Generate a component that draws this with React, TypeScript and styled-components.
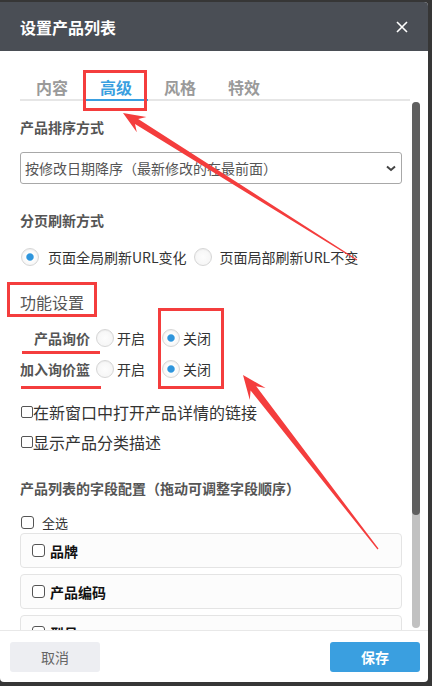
import React from "react";
import styled, { createGlobalStyle } from "styled-components";

const GlobalStyle = createGlobalStyle`
  html, body {
    margin: 0;
    padding: 0;
    background: #363636;
  }
  body {
    font-family: "Noto Sans CJK SC", "Noto Sans", sans-serif;
  }
  * {
    box-sizing: border-box;
  }
`;

const fields = ["品牌", "产品编码", "型号"];

export default function App() {
  return (
    <Page>
      <GlobalStyle />
      <Modal>
        <Header>
          <Title>设置产品列表</Title>
          <CloseButton aria-label="关闭">
            <svg width="12" height="12" viewBox="0 0 12 12">
              <path d="M1 1 L11 11 M11 1 L1 11" stroke="#fff" strokeWidth="1.6" />
            </svg>
          </CloseButton>
        </Header>

        <TabBar>
          <Tab>内容</Tab>
          <Tab $active>高级</Tab>
          <Tab>风格</Tab>
          <Tab>特效</Tab>
        </TabBar>

        <BodyRow>
          <Body>
            <SectionLabel $mt={16}>产品排序方式</SectionLabel>
            <SelectBox>
              <span>按修改日期降序（最新修改的在最前面）</span>
              <svg width="10" height="7" viewBox="0 0 10 7">
                <path d="M1 1.5 L5 5 L9 1.5" fill="none" stroke="#444" strokeWidth="2" />
              </svg>
            </SelectBox>

            <SectionLabel $mt={26}>分页刷新方式</SectionLabel>
            <RadioRow>
              <Radio $checked $ml={1} />
              <RadioText $ml={9}>页面全局刷新URL变化</RadioText>
              <Radio $ml={7} />
              <RadioText $ml={8}>页面局部刷新URL不变</RadioText>
            </RadioRow>

            <Heading>功能设置</Heading>
            <OptionRow $mt={8}>
              <OptionLabel>产品询价</OptionLabel>
              <Radio $ml={6} />
              <RadioText $ml={3}>开启</RadioText>
              <Radio $checked $ml={17} />
              <RadioText $ml={3}>关闭</RadioText>
            </OptionRow>
            <OptionRow $mt={1}>
              <OptionLabel>加入询价篮</OptionLabel>
              <Radio $ml={6} />
              <RadioText $ml={3}>开启</RadioText>
              <Radio $checked $ml={17} />
              <RadioText $ml={3}>关闭</RadioText>
            </OptionRow>

            <CheckRow $mt={15}>
              <CheckBox $size={12} $ml={1} />
              在新窗口中打开产品详情的链接
            </CheckRow>
            <CheckRow $mt={4}>
              <CheckBox $size={12} $ml={1} />
              显示产品分类描述
            </CheckRow>

            <SectionLabel $mt={23}>产品列表的字段配置（拖动可调整字段顺序）</SectionLabel>
            <SelectAll>
              <CheckBox $size={13} $ml={1} />
              <SelectAllText>全选</SelectAllText>
            </SelectAll>

            <FieldList>
              {fields.map((f) => (
                <FieldItem key={f}>
                  <CheckBox $size={13} />
                  <FieldName>{f}</FieldName>
                </FieldItem>
              ))}
            </FieldList>
          </Body>
          <ScrollTrack>
            <ScrollThumb />
          </ScrollTrack>
        </BodyRow>

        <Footer>
          <CancelButton>取消</CancelButton>
          <SaveButton>保存</SaveButton>
        </Footer>
      </Modal>

      <Annotations width="432" height="686" viewBox="0 0 432 686">
        <g fill="none" stroke="#f43d3d" strokeWidth="3">
          <rect x="84.5" y="71.5" width="61" height="38" />
          <rect x="8.5" y="283.5" width="87" height="32" />
          <rect x="159.5" y="309.5" width="63" height="78" />
        </g>
        <g fill="#f43d3d">
          <rect x="22" y="351" width="78" height="3" />
          <rect x="21" y="386" width="80" height="3" />
          <polygon points="123,113 146.4,117.1 138.2,119 357.3,259.6 356.7,260.4 135,124 136.8,132.3" />
          <polygon points="243,375 265.6,387.9 256.2,386.3 378.5,548.6 377.5,549.4 250.6,390.5 249.8,400.1" />
        </g>
      </Annotations>
    </Page>
  );
}

const Page = styled.div`
  position: relative;
  width: 432px;
  height: 686px;
  padding-top: 2px;
  overflow: hidden;
`;

const Modal = styled.div`
  width: 428px;
  height: 680px;
  background: #fff;
  border-radius: 0 4px 4px 4px;
  overflow: hidden;
  display: flex;
  flex-direction: column;
`;

const Header = styled.div`
  height: 49px;
  flex: none;
  background: #4a4e55;
  display: flex;
  align-items: center;
  justify-content: space-between;
  padding: 0 20px;
`;

const Title = styled.div`
  color: #fff;
  font-size: 16px;
  font-weight: bold;
  line-height: 24px;
`;

const CloseButton = styled.button`
  background: none;
  border: none;
  padding: 0;
  display: flex;
  cursor: pointer;
`;

const TabBar = styled.div`
  flex: none;
  height: 50px;
  margin: 0 18px 0 20px;
  display: flex;
  align-items: flex-end;
  border-bottom: 2px solid #e6e6e6;
`;

const Tab = styled.div<{ $active?: boolean }>`
  width: 64px;
  text-align: center;
  font-size: 16px;
  font-weight: bold;
  line-height: 24px;
  margin-bottom: -2px;
  color: ${(p) => (p.$active ? "#3a9fe0" : "#9a9a9a")};
  border-bottom: 2px solid ${(p) => (p.$active ? "#3a9fe0" : "transparent")};
`;

const BodyRow = styled.div`
  flex: 1;
  min-height: 0;
  display: flex;
  margin: 0 8px 0 20px;
`;

const Body = styled.div`
  flex: 1;
  min-width: 0;
  overflow: hidden;
  padding-right: 10px;
`;

const ScrollTrack = styled.div`
  flex: none;
  width: 8px;
  margin: 1px 0 2px;
  background: #c1c1c1;
  border-radius: 4px;
  display: flex;
  flex-direction: column;
`;

const ScrollThumb = styled.div`
  height: 413px;
  background: #5f5f5f;
  border-radius: 4px;
`;

const SectionLabel = styled.div<{ $mt: number }>`
  margin-top: ${(p) => p.$mt}px;
  font-size: 14px;
  font-weight: bold;
  line-height: 20px;
  color: #555;
`;

const SelectBox = styled.div`
  margin-top: 15px;
  height: 32px;
  border: 1px solid #a8a8a8;
  border-radius: 3px;
  padding: 0 5px 0 4px;
  display: flex;
  align-items: center;
  justify-content: space-between;
  font-size: 14px;
  color: #555;
`;

const RadioRow = styled.div`
  margin-top: 17px;
  height: 20px;
  display: flex;
  align-items: center;
`;

const Radio = styled.span<{ $checked?: boolean; $ml: number }>`
  flex: none;
  width: 18px;
  height: 18px;
  margin-left: ${(p) => p.$ml}px;
  border: 1px solid #d6d6d6;
  border-radius: 50%;
  background: ${(p) =>
    p.$checked
      ? "radial-gradient(circle, #2f95dc 0 3px, #7cc0ec 3.6px, #fdfdfd 4.2px, #f1f1f1 100%)"
      : "radial-gradient(circle, #fdfdfd 0, #f3f3f3 100%)"};
  box-shadow: inset 0 1px 1px rgba(0, 0, 0, 0.04);
`;

const RadioText = styled.span<{ $ml: number }>`
  margin-left: ${(p) => p.$ml}px;
  font-size: 14px;
  line-height: 20px;
  color: #333;
  white-space: nowrap;
`;

const Heading = styled.div`
  margin-top: 22px;
  font-size: 16px;
  line-height: 26px;
  color: #555;
`;

const OptionRow = styled.div<{ $mt: number }>`
  margin-top: ${(p) => p.$mt}px;
  height: 30px;
  display: flex;
  align-items: center;
`;

const OptionLabel = styled.span`
  width: 70px;
  text-align: right;
  font-size: 14px;
  font-weight: bold;
  color: #555;
`;

const CheckRow = styled.div<{ $mt: number }>`
  margin-top: ${(p) => p.$mt}px;
  height: 26px;
  display: flex;
  align-items: center;
  font-size: 16px;
  color: #333;
`;

const CheckBox = styled.span<{ $size: number; $ml?: number }>`
  flex: none;
  width: ${(p) => p.$size}px;
  height: ${(p) => p.$size}px;
  margin-left: ${(p) => p.$ml ?? 0}px;
  border: 1px solid #555;
  border-radius: ${(p) => (p.$size > 12 ? 3 : 2)}px;
  background: #fff;
`;

const SelectAll = styled.div`
  margin-top: 14px;
  height: 20px;
  display: flex;
  align-items: center;
`;

const SelectAllText = styled.span`
  margin-left: 8px;
  font-size: 13px;
  color: #333;
`;

const FieldList = styled.div`
  margin-top: 1px;
  display: flex;
  flex-direction: column;
  gap: 6px;
`;

const FieldItem = styled.div`
  flex: none;
  height: 35px;
  border: 1px solid #e4e4e4;
  border-radius: 4px;
  background: #fcfcfc;
  display: flex;
  align-items: center;
  padding-left: 11px;
`;

const FieldName = styled.span`
  margin-left: 5px;
  font-size: 14px;
  font-weight: bold;
  color: #111;
`;

const Footer = styled.div`
  flex: none;
  border-top: 1px solid #e8e8e8;
  padding: 11px 8px 10px 10px;
  display: flex;
  justify-content: space-between;
`;

const BaseButton = styled.button`
  width: 90px;
  height: 30px;
  border: none;
  border-radius: 3px;
  font-family: inherit;
  font-size: 14px;
  cursor: pointer;
`;

const CancelButton = styled(BaseButton)`
  background: #edeef2;
  color: #666;
`;

const SaveButton = styled(BaseButton)`
  background: #3a9fe0;
  color: #fff;
  font-weight: bold;
`;

const Annotations = styled.svg`
  position: absolute;
  top: 0;
  left: 0;
  pointer-events: none;
`;
